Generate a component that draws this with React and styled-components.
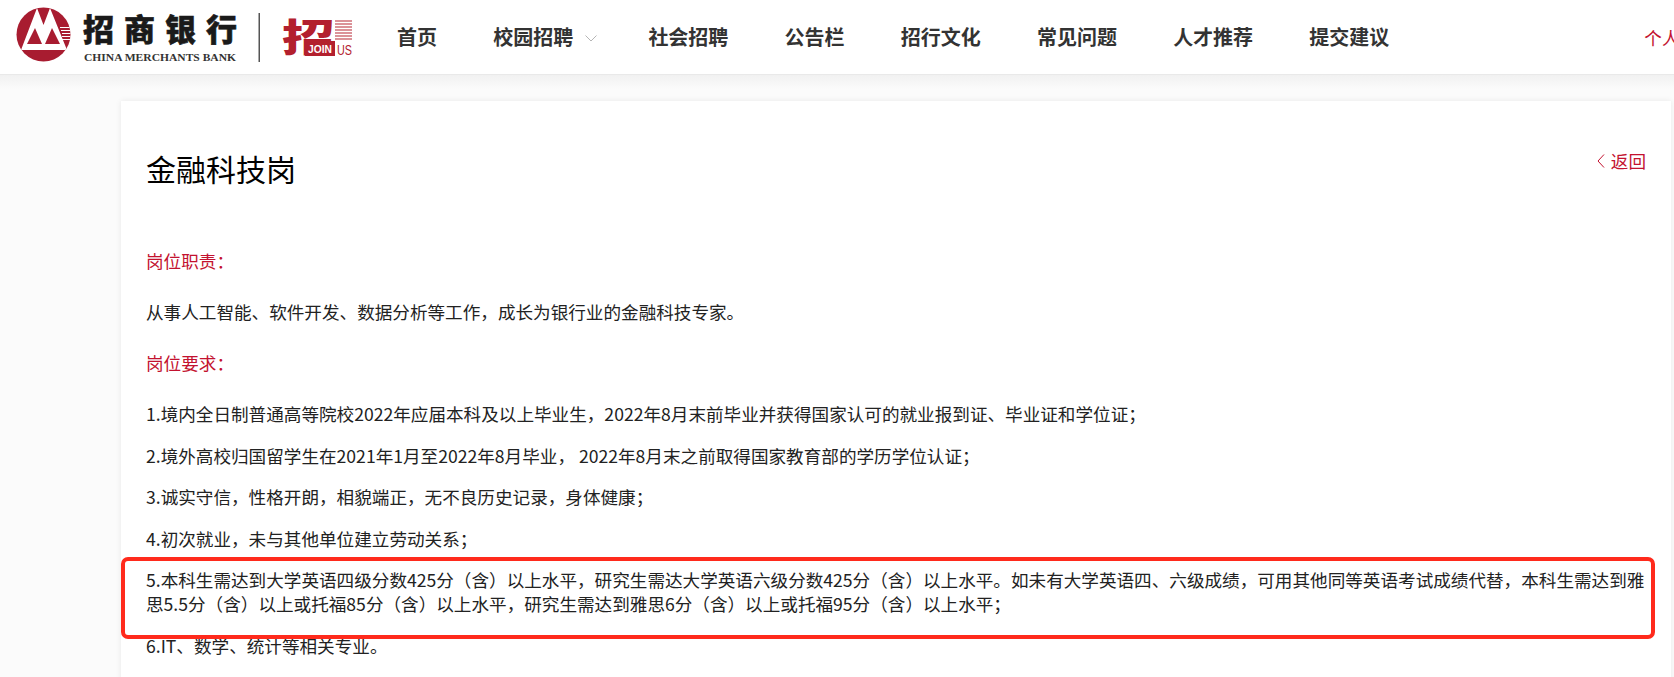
import styled, { createGlobalStyle } from 'styled-components';

const GlobalStyle = createGlobalStyle`
  html, body {
    margin: 0;
    height: 100%;
    overflow: hidden;
    background: #fbfbfb;
    font-family: "Noto Sans CJK SC", "Noto Sans", sans-serif;
  }
`;

const NAV_ITEMS = [
  { label: '首页' },
  { label: '校园招聘', hasMenu: true },
  { label: '社会招聘' },
  { label: '公告栏' },
  { label: '招行文化' },
  { label: '常见问题' },
  { label: '人才推荐' },
  { label: '提交建议' },
];

const REQUIREMENTS = [
  '1.境内全日制普通高等院校2022年应届本科及以上毕业生，2022年8月末前毕业并获得国家认可的就业报到证、毕业证和学位证；',
  '2.境外高校归国留学生在2021年1月至2022年8月毕业， 2022年8月末之前取得国家教育部的学历学位认证；',
  '3.诚实守信，性格开朗，相貌端正，无不良历史记录，身体健康；',
  '4.初次就业，未与其他单位建立劳动关系；',
];

const Logo = () => (
  <LogoSvg viewBox="0 0 369 74" width="369" height="74">
    <defs>
      <clipPath id="badge">
        <circle cx="43.5" cy="34.5" r="27" />
      </clipPath>
    </defs>
    <circle cx="43.5" cy="34.5" r="27" fill="#a81c30" />
    <g clipPath="url(#badge)">
      <path d="M21 50 L37 8 L43.5 25 L50 8 L67 50 Z" fill="#fff" />
      <path d="M27 44 L35 28 L42 44 Z M45 44 L52 28 L60 44 Z" fill="#a81c30" />
      <path
        d="M60 27.5h12M61 30.5h11M62 33.5h10M62 36.5h10M62 39.5h10"
        stroke="#fff"
        strokeWidth="1.2"
      />
    </g>
    <text
      x="83"
      y="41"
      fontFamily="'Noto Sans CJK SC', sans-serif"
      fontWeight="900"
      fontSize="31"
      letterSpacing="10"
      stroke="#1a1a1a"
      strokeWidth="0.6"
      fill="#1a1a1a"
    >
      招商银行
    </text>
    <text
      x="84"
      y="61"
      fontFamily="'Liberation Serif', serif"
      fontWeight="700"
      fontSize="10.4"
      textLength="152"
      lengthAdjust="spacingAndGlyphs"
      fill="#333"
    >
      CHINA MERCHANTS BANK
    </text>
    <rect x="258.5" y="13" width="1.5" height="49" fill="#555" />
    <text
      transform="translate(282 51) scale(1.38 1)"
      fontFamily="'Noto Sans CJK SC', sans-serif"
      fontWeight="900"
      fontSize="38"
      fill="#b3202e"
    >
      招
    </text>
    <path
      d="M335 21h17M335 24h17M335 27h17M335 30h17M335 33h17M335 36h17M335 39h17"
      stroke="#cf6f78"
      strokeWidth="1.4"
    />
    <rect x="305" y="41" width="30" height="15" fill="#b3202e" />
    <text
      x="308"
      y="53"
      fontFamily="'Liberation Sans', sans-serif"
      fontWeight="700"
      fontSize="11"
      textLength="24"
      lengthAdjust="spacingAndGlyphs"
      fill="#fff"
    >
      JOIN
    </text>
    <text
      x="337"
      y="55"
      fontFamily="'Liberation Sans', sans-serif"
      fontSize="15"
      textLength="15"
      lengthAdjust="spacingAndGlyphs"
      fill="#b3202e"
    >
      US
    </text>
  </LogoSvg>
);

const App = () => {
  return (
    <>
      <GlobalStyle />
      <Header>
        <Logo />
        <Nav>
          {NAV_ITEMS.map(item => (
            <NavItem key={item.label} $hasMenu={item.hasMenu}>
              {item.label}
              {item.hasMenu && (
                <Chevron viewBox="0 0 12 7" width="12" height="7">
                  <path d="M0.5 0.5 L6 6 L11.5 0.5" />
                </Chevron>
              )}
            </NavItem>
          ))}
        </Nav>
        <UserLink>个人中心</UserLink>
      </Header>
      <Page>
        <Card>
          <TitleRow>
            <Title>金融科技岗</Title>
            <BackLink>
              <BackIcon viewBox="0 0 8 14" width="8" height="14">
                <path d="M7 0.5 L1 7 L7 13.5" />
              </BackIcon>
              返回
            </BackLink>
          </TitleRow>
          <SectionTitle>岗位职责：</SectionTitle>
          <Paragraph>从事人工智能、软件开发、数据分析等工作，成长为银行业的金融科技专家。</Paragraph>
          <SectionTitle>岗位要求：</SectionTitle>
          {REQUIREMENTS.map(text => (
            <Paragraph key={text}>{text}</Paragraph>
          ))}
          <MarkedParagraph>
            5.本科生需达到大学英语四级分数425分（含）以上水平，研究生需达大学英语六级分数425分（含）以上水平。如未有大学英语四、六级成绩，可用其他同等英语考试成绩代替，本科生需达到雅思5.5分（含）以上或托福85分（含）以上水平，研究生需达到雅思6分（含）以上或托福95分（含）以上水平；
          </MarkedParagraph>
          <Paragraph>6.IT、数学、统计等相关专业。</Paragraph>
        </Card>
      </Page>
    </>
  );
};

export default App;

const Header = styled.header`
  display: flex;
  align-items: center;
  height: 74px;
  background: #fff;
  border-bottom: 1px solid #e9e9e9;
  overflow: hidden;
`;

const LogoSvg = styled.svg`
  flex-shrink: 0;
  display: block;
`;

const Nav = styled.nav`
  display: flex;
  flex-shrink: 0;
  margin-left: 28px;
  gap: 56.2px;
`;

const NavItem = styled.a`
  display: flex;
  align-items: center;
  flex-shrink: 0;
  font-size: 20px;
  line-height: 30px;
  font-weight: 700;
  color: #333;
  white-space: nowrap;
`;

const Chevron = styled.svg`
  margin-left: 12px;
  margin-right: -5px;
  margin-top: 3px;

  path {
    fill: none;
    stroke: #b5b5b5;
    stroke-width: 1;
  }
`;

const UserLink = styled.a`
  flex-shrink: 0;
  margin-left: 255px;
  font-size: 17.6px;
  color: #c3122f;
  white-space: nowrap;
`;

const Page = styled.main`
  padding: 26px 3px 0 121px;
  background: linear-gradient(#f1f1f1, #fbfbfb 14px);
`;

const Card = styled.section`
  padding: 43px 26px 0 25px;
  min-height: 700px;
  background: #fff;
  box-shadow: 0 0 6px rgba(0, 0, 0, 0.08);
`;

const TitleRow = styled.div`
  display: flex;
  align-items: center;
  justify-content: space-between;
  margin-bottom: 57px;
`;

const Title = styled.h1`
  margin: 0;
  font-size: 30px;
  line-height: 48px;
  font-weight: 400;
  color: #000;
`;

const BackLink = styled.a`
  display: flex;
  align-items: center;
  gap: 6px;
  margin-top: -15px;
  margin-right: -1px;
  font-size: 17.6px;
  color: #c3122f;
`;

const BackIcon = styled.svg`
  path {
    fill: none;
    stroke: #c3122f;
    stroke-width: 1;
  }
`;

const SectionTitle = styled.h2`
  margin: 27px 0;
  font-size: 17.6px;
  line-height: 24px;
  font-weight: 400;
  color: #c3122f;
`;

const Paragraph = styled.p`
  margin: 0 0 17.6px;
  font-size: 17.6px;
  line-height: 24px;
  color: #222;
`;

const MarkedParagraph = styled(Paragraph)`
  position: relative;

  &::after {
    content: '';
    position: absolute;
    top: -11px;
    left: -25px;
    right: -10px;
    bottom: -23px;
    border: 4px solid #ff2a1c;
    border-radius: 7px;
    pointer-events: none;
  }
`;
